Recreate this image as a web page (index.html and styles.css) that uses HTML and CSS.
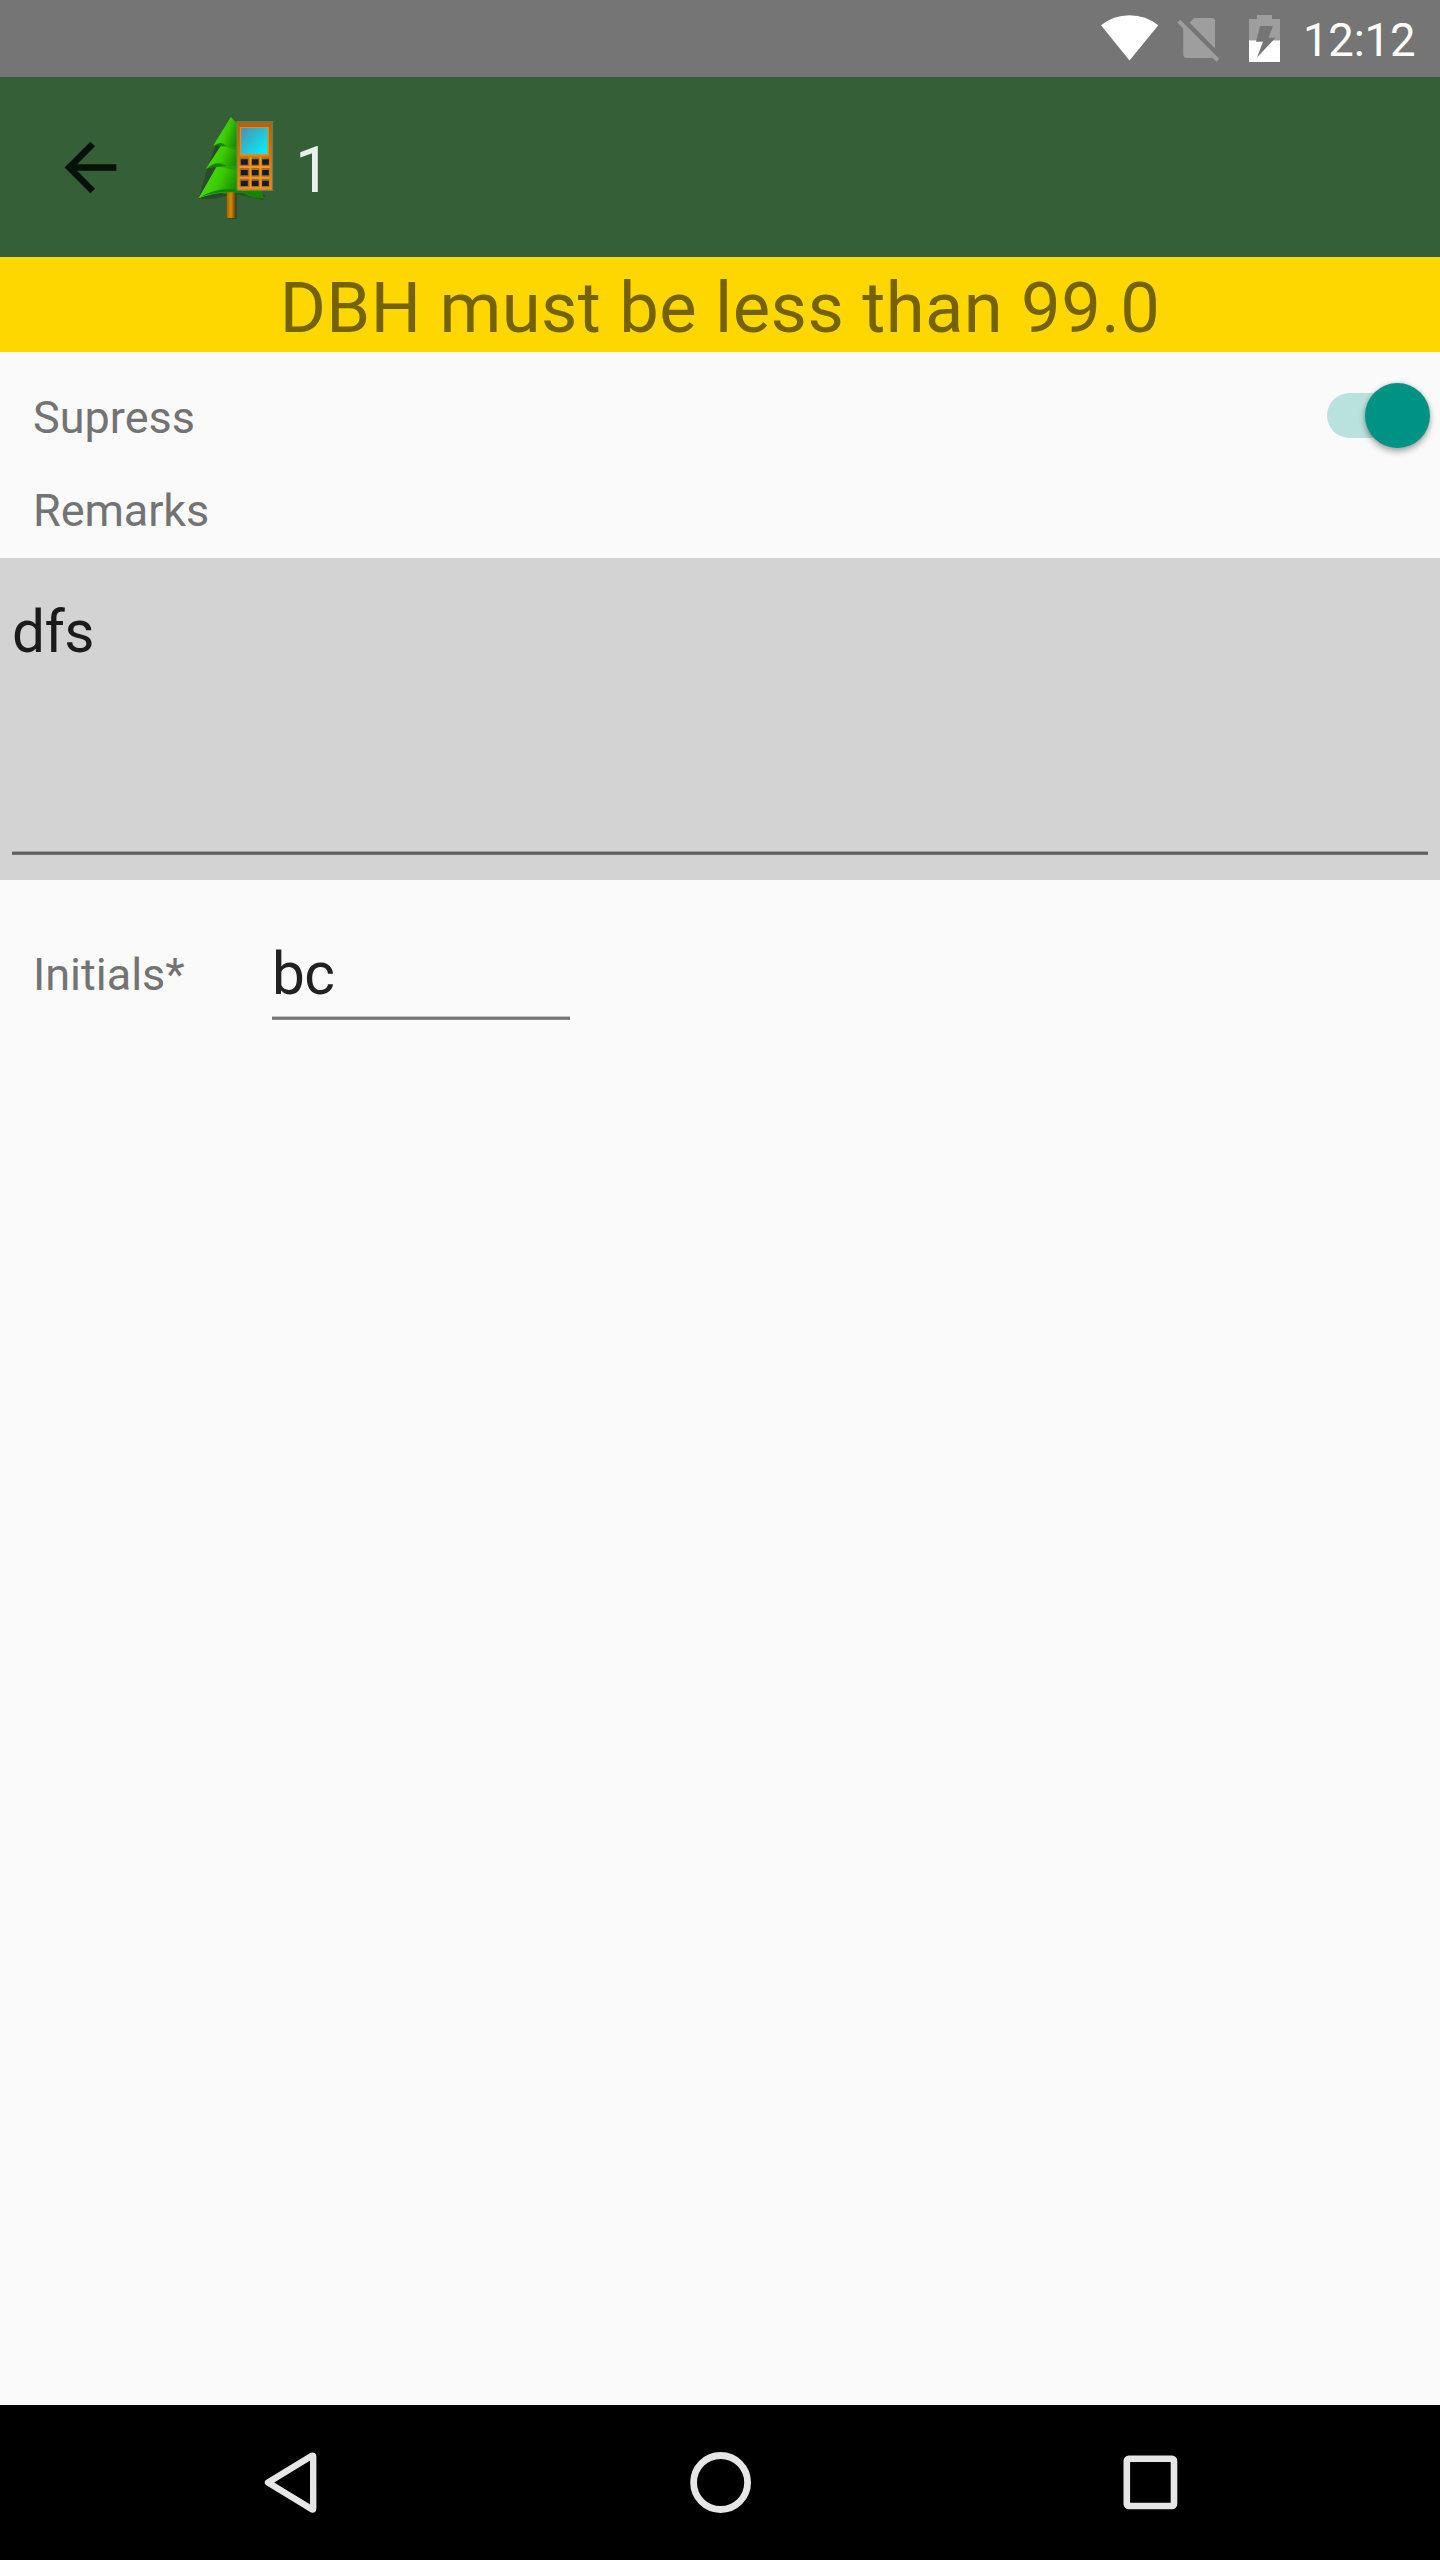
FILE: index.html
```
<!DOCTYPE html>
<html lang="en">
<head>
<meta charset="utf-8">
<title>Tree</title>
<link rel="stylesheet" href="styles.css">
</head>
<body>
<div class="screen">
  <div class="status">
    <svg class="wifi" width="60" height="77" viewBox="1100 0 60 77"><path fill="#fff" d="M1129.5 60.5 1101 25.3Q1113 15.2 1129.5 15.2T1158.3 25.3Z"/></svg>
    <svg class="sim" width="44" height="77" viewBox="1176 0 44 77"><g fill="#9e9e9e"><path d="M1189.5 22.5 1194.3 18H1212Q1215 18 1215 21V48.6Z"/><path d="M1183.2 27.6 1213.5 58H1187Q1183.2 58 1183.2 54Z"/><path d="M1177.3 22.5 1180.2 19.7 1219.3 58.8 1216.4 61.7Z"/></g></svg>
    <svg class="battery" width="31" height="77" viewBox="1249 0 31 77"><path fill="#9e9e9e" d="M1249 40V19H1257V15H1272V19H1280V40Z"/><path fill="#fff" d="M1249 40.3H1280V62H1249Z"/><path fill="#757575" d="M1260 26H1273L1268.5 37.8H1275.5L1257 57.5 1263 41.8H1256Z"/></svg>
    <span class="clock">12:12</span>
  </div>
  <header class="toolbar">
    <svg class="back" width="54" height="54" viewBox="64 140 54 54"><path fill="none" stroke="#07100a" stroke-width="6.6" d="M116.3 167.5H69M92.7 144 69.3 167.5 92.7 191"/></svg>
    <svg class="logo" width="100" height="120" viewBox="1.5 0 300 360">
      <defs>
        <linearGradient id="leaf" x1="0" y1="0" x2="1" y2="0.35"><stop offset="0.2" stop-color="#46de05"/><stop offset="0.6" stop-color="#3ccb03"/><stop offset="1" stop-color="#1f9003"/></linearGradient>
        <linearGradient id="lcd" x1="0" y1="0" x2="1" y2="1"><stop offset="0" stop-color="#4b91b4"/><stop offset="1" stop-color="#00f4fa"/></linearGradient>
        <linearGradient id="bark" x1="0" y1="0" x2="1" y2="0"><stop offset="0" stop-color="#a86400"/><stop offset="0.5" stop-color="#d58a05"/><stop offset="1" stop-color="#704000"/></linearGradient>
        <linearGradient id="case" x1="0" y1="0" x2="0" y2="1"><stop offset="0" stop-color="#a8640c"/><stop offset="0.5" stop-color="#cf780b"/><stop offset="1" stop-color="#ee8c0c"/></linearGradient>
        <filter id="soft"><feGaussianBlur stdDeviation="2"/></filter>
        <filter id="softer"><feGaussianBlur stdDeviation="1.3"/></filter>
      </defs>
      <g filter="url(#soft)">
        <path fill="#1f3d20" opacity=".55" d="M127 42 76 126 52 194 28 281 70 282 115 272V342H142V268L220 284 228 272 150 240Z"/>
        <path fill="#178405" d="M110 252 215 256 224 280Q190 282 160 264L100 266Z"/>
        <path fill="url(#bark)" d="M112 255H137V339H112Z"/>
        <path fill="url(#leaf)" d="M84 180 27 280Q80 258 150 262V180Z"/>
        <path fill="#1c8c04" d="M84 182Q110 192 150 196V180H100Z" opacity=".5"/>
        <path fill="#178405" d="M33 277Q80 246 150 254V261Q80 257 33 277Z"/>
        <path fill="url(#leaf)" d="M98 116 49 191Q75 181 100 180L150 184V110Z"/>
        <path fill="#178405" d="M53 189Q78 168 100 178L112 182 90 185Z"/>
        <path fill="#1c8c04" d="M96 120 150 140V112H100Z" opacity=".5"/>
        <path fill="url(#leaf)" d="M124 36 71 122Q92 115 103 120L124 126H150V62Z"/>
        <path fill="#178405" d="M76 120Q96 108 106 120L112 124 94 124Z"/>
      </g>
      <g filter="url(#softer)">
        <path fill="#7d8770" opacity=".7" d="M141 48H251V258H141Z"/>
        <path fill="url(#case)" d="M144 51H247V254H144Z"/>
        <path fill="#a56b20" d="M151 54H240V65H151Z"/>
        <path fill="#e98b23" d="M151 66H238V152H151Z"/>
        <path fill="url(#lcd)" d="M155 69H234V147H155Z"/>
        <path fill="#a86c24" d="M151 158H240V246H151Z"/>
        <path stroke="#ff960e" stroke-width="6" d="M183 156V250M213 156V250M150 186H241M150 218H241"/>
        <path fill="#101c34" d="M154 163h21v16h-21zM187 163h20v16h-20zM218 163h20v16h-20zM154 195h21v16h-21zM187 195h20v16h-20zM218 195h20v16h-20zM154 227h21v16h-21zM187 227h20v16h-20zM218 227h20v16h-20z"/>
      </g>
    </svg>
    <span class="title">1</span>
  </header>
  <div class="banner">DBH must be less than 99.0</div>
  <div class="row suppress">
    <span class="label">Supress</span>
    <span class="switch"><span class="thumb"></span></span>
  </div>
  <div class="row remarks"><span class="label">Remarks</span></div>
  <div class="memo"><div class="memo-field">dfs</div></div>
  <div class="row initials">
    <span class="label">Initials*</span>
    <span class="field">bc</span>
  </div>
  <nav class="nav">
    <svg width="64" height="64" viewBox="260 2450 64 64"><path fill="none" stroke="#e6e6e6" stroke-width="6.4" stroke-linejoin="round" d="M268 2482.5 312.3 2455.6Q313.2 2455.6 313.2 2456.5V2508.5Q313.2 2509.5 312.3 2509.5Z"/></svg>
    <svg width="64" height="64" viewBox="688 2450 64 64"><circle cx="719.6" cy="2482.5" r="27" fill="none" stroke="#e6e6e6" stroke-width="6.8"/></svg>
    <svg width="64" height="64" viewBox="1118 2450 64 64"><rect x="1126.8" y="2458.8" width="47.2" height="47.2" rx="2" fill="none" stroke="#e6e6e6" stroke-width="6.6"/></svg>
  </nav>
</div>
</body>
</html>
```
FILE: styles.css
```
* { box-sizing: border-box; }
body { margin: 0; font-family: Roboto, "Liberation Sans", sans-serif; }
svg { display: block; flex: none; }
.screen { width: 1440px; height: 2560px; display: flex; flex-direction: column; background: #fafafa; }
.status { height: 77px; flex: none; display: flex; justify-content: flex-end; background: #757575; padding-right: 23px; }
.sim { margin-left: 16px; }
.battery { margin-left: 29px; }
.clock { margin-left: 23px; width: 114px; color: #fff; font-size: 45.5px; letter-spacing: -0.2px; line-height: 82px; white-space: nowrap; }
.toolbar { height: 180px; flex: none; display: flex; align-items: flex-start; background: #355f37; padding-left: 64px; }
.back { margin-top: 63px; }
.logo { margin: 28px 0 0 72px; }
.title { margin-left: 5px; font-size: 64px; line-height: 188px; color: #ebefeb; }
.banner { height: 95px; flex: none; padding-top: 10px; background: #ffd700; color: #756300; font-size: 70.5px; letter-spacing: 0.45px; line-height: 82px; text-align: center; white-space: nowrap; }
.row { display: flex; flex: none; padding-left: 33px; }
.label { font-size: 45px; color: #737373; white-space: nowrap; }
.suppress { height: 112px; padding-right: 10px; padding-top: 31px; line-height: 70px; justify-content: space-between; }
.switch { position: relative; width: 103px; height: 65px; display: flex; justify-content: flex-end; align-items: center; }
.switch::before { content: ""; position: absolute; left: 0; top: 10px; width: 80px; height: 45px; border-radius: 23px; background: #b9e1dd; }
.thumb { position: relative; width: 65px; height: 65px; border-radius: 50%; background: #009385; box-shadow: 0 4px 6px rgba(0,0,0,.3), 0 0 4px rgba(0,0,0,.15); }
.remarks { height: 94px; line-height: 94px; }
.remarks .label { letter-spacing: -0.1px; }
.memo { height: 322px; flex: none; background: #d3d3d3; padding: 39px 12px 25px; }
.memo-field { height: 258px; font-size: 58.5px; letter-spacing: -0.6px; line-height: 70px; color: #1b1b1b; background: linear-gradient(#a3a3a3 1px, #5f5f5f 1px, #5f5f5f 3px, #757575 3px) 0 100% / 100% 4px no-repeat; }
.initials { height: 200px; padding-top: 34px; align-items: flex-start; line-height: 120px; }
.initials .label { width: 239px; line-height: 122px; }
.field { width: 298px; height: 106px; font-size: 58.5px; letter-spacing: -0.6px; line-height: 120px; color: #212121; background: linear-gradient(#c4c4c4 1px, #747474 1px, #747474 3px, #8c8c8c 3px) 0 100% / 100% 4px no-repeat; }
.nav { height: 155px; margin-top: auto; flex: none; display: flex; justify-content: space-between; align-items: flex-start; background: #000; padding: 45px 258px 0 260px; }
```
